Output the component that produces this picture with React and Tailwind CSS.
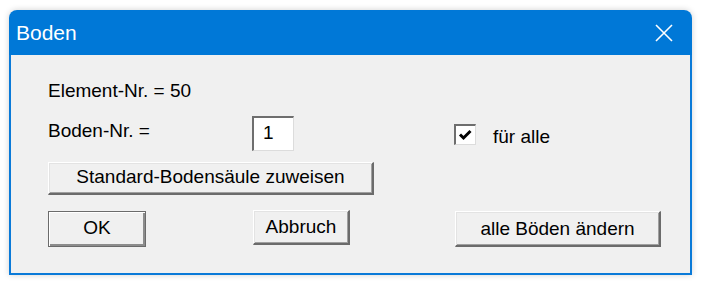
import React from 'react';

const font = { fontFamily: '"Liberation Sans", Arial, sans-serif' };

function WinButton({ label, className = '', isDefault = false }) {
    return (
        <div
            className={
                'flex items-center justify-center bg-[#f0f0f0] text-[19px] leading-[22px] text-black ' +
                (isDefault
                    ? 'border border-[#6b6b6b] shadow-[inset_1px_1px_0_#ffffff,inset_-2px_-2px_0_#8c8c8c] '
                    : 'border-t border-l border-t-white border-l-white border-r-2 border-b-2 border-r-[#6b6b6b] border-b-[#6b6b6b] shadow-[inset_1px_1px_0_#e3e3e3,inset_-1px_-1px_0_#a0a0a0] ') +
                className
            }
        >
            {label}
        </div>
    );
}

export default function App() {
    return (
        <div className="w-[703px] h-[286px] bg-white pt-[10px] pl-[9px]" style={font}>
            <div className="w-[683px] h-[265px] flex flex-col rounded-t-[8px] overflow-hidden shadow-[0_0_6px_rgba(0,0,0,0.18)]">
                {/* Title bar */}
                <div className="h-[45px] bg-[#0078d7] flex items-center justify-between pl-[7px] pr-[19px] shrink-0">
                    <span className="text-white text-[21px] leading-[24px] mt-[1px]">Boden</span>
                    <svg width="18" height="18" viewBox="0 0 18 18" className="mt-[1px]">
                        <path d="M1 1 L17 17 M17 1 L1 17" stroke="#ffffff" strokeWidth="1.6" fill="none" />
                    </svg>
                </div>

                {/* Body */}
                <div className="flex-1 bg-[#f0f0f0] border-x-2 border-b-2 border-[#0a7ad8] pl-[37px] pt-[25px] text-black text-[19px] leading-[22px]">
                    <div>Element-Nr. = 50</div>

                    <div className="flex items-start h-[35px] mt-[14px]">
                        <div className="w-[204px] mt-[4px]">Boden-Nr. =</div>
                        <div className="w-[42px] h-[35px] bg-white border-t-2 border-l-2 border-t-[#6e6e6e] border-l-[#6e6e6e] border-r border-b border-r-[#dcdcdc] border-b-[#dcdcdc] pl-[9px] pt-[4px]">
                            1
                        </div>
                        <div className="ml-[160px] mt-[8px] w-[22px] h-[21px] bg-white border-t-2 border-l-2 border-t-[#6e6e6e] border-l-[#6e6e6e] border-r border-b border-r-[#dcdcdc] border-b-[#dcdcdc] flex items-center justify-center">
                            <svg width="15" height="14" viewBox="0 0 15 14">
                                <path d="M2 6.5 L5.5 10 L12.5 3" stroke="#000000" strokeWidth="3" fill="none" />
                            </svg>
                        </div>
                        <div className="ml-[17px] mt-[10px]">für alle</div>
                    </div>

                    <WinButton label="Standard-Bodensäule zuweisen" className="mt-[11px] w-[326px] h-[33px] pb-[3px]" />

                    <div className="flex items-start mt-[16px]">
                        <WinButton label="OK" isDefault className="w-[98px] h-[36px] pb-[2px]" />
                        <WinButton label="Abbruch" className="ml-[107px] -mt-[1px] w-[97px] h-[35px]" />
                        <WinButton label="alle Böden ändern" className="ml-[105px] w-[206px] h-[36px]" />
                    </div>
                </div>
            </div>
        </div>
    );
}
